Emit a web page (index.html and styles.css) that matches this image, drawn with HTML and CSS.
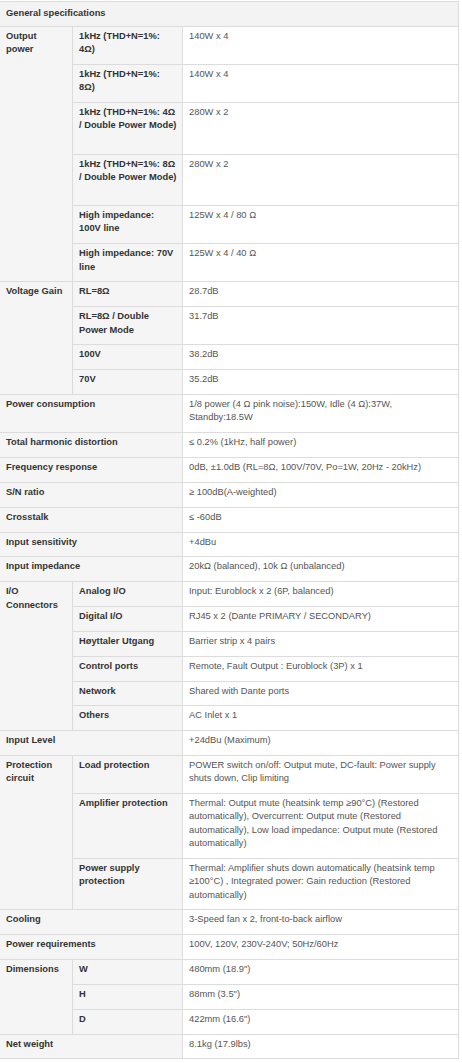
FILE: index.html
```html
<!DOCTYPE html>
<html>
<head>
<meta charset="utf-8">
<link rel="stylesheet" href="styles.css">
</head>
<body>
<table class="spec">
  <colgroup>
    <col class="c1">
    <col class="c2">
    <col class="c3">
  </colgroup>
  <tbody>
    <tr><th class="head" colspan="3">General specifications</th></tr>

    <tr><th class="grp" rowspan="6">Output power</th><th>1kHz (THD+N=1%: 4Ω)</th><td>140W x 4</td></tr>
    <tr><th>1kHz (THD+N=1%: 8Ω)</th><td>140W x 4</td></tr>
    <tr><th class="tall">1kHz (THD+N=1%: 4Ω / Double Power Mode)</th><td>280W x 2</td></tr>
    <tr><th class="tall">1kHz (THD+N=1%: 8Ω / Double Power Mode)</th><td>280W x 2</td></tr>
    <tr><th>High impedance: 100V line</th><td>125W x 4 / 80 Ω</td></tr>
    <tr><th>High impedance: 70V line</th><td>125W x 4 / 40 Ω</td></tr>

    <tr><th class="grp" rowspan="4">Voltage Gain</th><th>RL=8Ω</th><td>28.7dB</td></tr>
    <tr><th>RL=8Ω / Double Power Mode</th><td>31.7dB</td></tr>
    <tr><th>100V</th><td>38.2dB</td></tr>
    <tr><th>70V</th><td>35.2dB</td></tr>

    <tr><th colspan="2">Power consumption</th><td>1/8 power (4 Ω pink noise):150W, Idle (4 Ω):37W, Standby:18.5W</td></tr>
    <tr><th colspan="2">Total harmonic distortion</th><td>≤ 0.2% (1kHz, half power)</td></tr>
    <tr><th colspan="2">Frequency response</th><td>0dB, ±1.0dB (RL=8Ω, 100V/70V, Po=1W, 20Hz - 20kHz)</td></tr>
    <tr><th colspan="2">S/N ratio</th><td>≥ 100dB(A-weighted)</td></tr>
    <tr><th colspan="2">Crosstalk</th><td>≤ -60dB</td></tr>
    <tr><th colspan="2">Input sensitivity</th><td>+4dBu</td></tr>
    <tr><th colspan="2">Input impedance</th><td>20kΩ (balanced), 10k Ω (unbalanced)</td></tr>

    <tr><th class="grp" rowspan="6">I/O Connectors</th><th>Analog I/O</th><td>Input: Euroblock x 2 (6P, balanced)</td></tr>
    <tr><th>Digital I/O</th><td>RJ45 x 2 (Dante PRIMARY / SECONDARY)</td></tr>
    <tr><th>Høyttaler Utgang</th><td>Barrier strip x 4 pairs</td></tr>
    <tr><th>Control ports</th><td>Remote, Fault Output : Euroblock (3P) x 1</td></tr>
    <tr><th>Network</th><td>Shared with Dante ports</td></tr>
    <tr><th>Others</th><td>AC Inlet x 1</td></tr>

    <tr><th colspan="2">Input Level</th><td>+24dBu (Maximum)</td></tr>

    <tr><th class="grp" rowspan="3">Protection circuit</th><th>Load protection</th><td>POWER switch on/off: Output mute, DC-fault: Power supply shuts down, Clip limiting</td></tr>
    <tr><th>Amplifier protection</th><td>Thermal: Output mute (heatsink temp ≥90°C) (Restored automatically), Overcurrent: Output mute (Restored automatically), Low load impedance: Output mute (Restored automatically)</td></tr>
    <tr><th>Power supply protection</th><td>Thermal: Amplifier shuts down automatically (heatsink temp ≥100°C) , Integrated power: Gain reduction (Restored automatically)</td></tr>

    <tr><th colspan="2">Cooling</th><td>3-Speed fan x 2, front-to-back airflow</td></tr>
    <tr><th colspan="2">Power requirements</th><td>100V, 120V, 230V-240V; 50Hz/60Hz</td></tr>

    <tr><th class="grp" rowspan="3">Dimensions</th><th>W</th><td>480mm (18.9")</td></tr>
    <tr><th>H</th><td>88mm (3.5")</td></tr>
    <tr><th>D</th><td>422mm (16.6")</td></tr>

    <tr><th colspan="2">Net weight</th><td>8.1kg (17.9lbs)</td></tr>
  </tbody>
</table>
</body>
</html>
```

FILE: styles.css
```css
html, body {
  margin: 0;
  padding: 0;
  background: #ffffff;
}

body {
  padding-top: 1px;
  font-family: "Liberation Sans", Arial, sans-serif;
  font-size: 9.33px;
  line-height: 13.33px;
}

.spec {
  border-collapse: collapse;
  table-layout: fixed;
  width: 459px;
  margin-left: -1px;
}

.c1 { width: 73px; }
.c2 { width: 110px; }
.c3 { width: 276px; }

.spec th,
.spec td {
  border: 1px solid #dcdcdc;
  padding: 3px 6px 7.5px 6px;
  vertical-align: top;
  text-align: left;
}

.spec th {
  background: #f5f5f5;
  color: #333333;
  font-weight: bold;
  padding-right: 5px;
}

.spec th.grp {
  padding-right: 7px;
}

.spec td {
  background: #ffffff;
  color: #555555;
  font-weight: normal;
}

.spec .head {
  background: #f3f3f3;
  font-weight: bold;
  padding-top: 5px;
  padding-bottom: 5.5px;
}

.spec .tall {
  padding-bottom: 20.83px;
}
```
